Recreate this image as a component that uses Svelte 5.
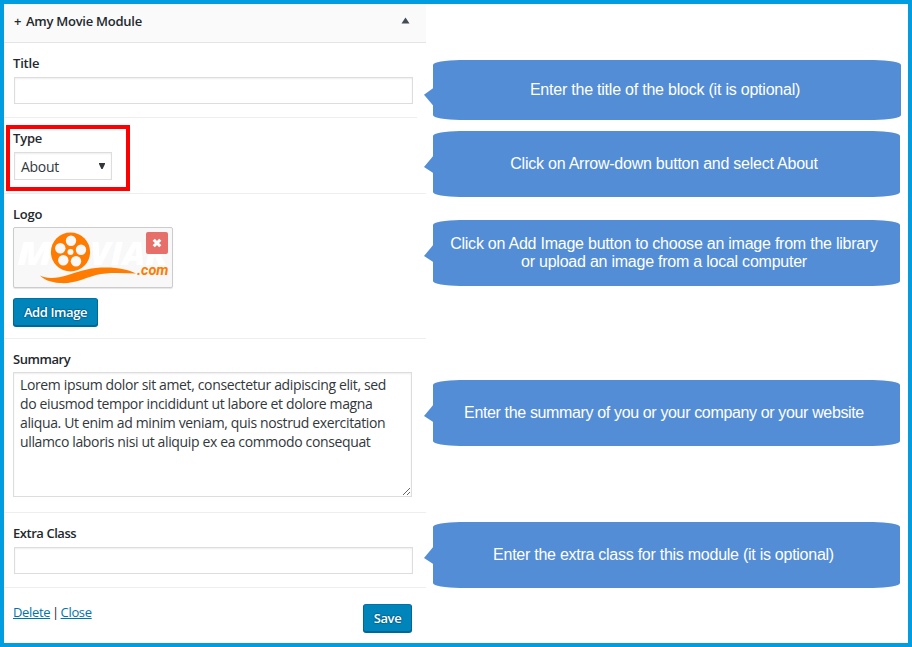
<script>
  const callouts = [
    { gap: 56, height: 60, width: 468, tail: 28, tracking: -0.22, inset: 4, lift: 0, lines: ['Enter the title of the block (it is optional)'] },
    { gap: 11, height: 66, width: 467, tail: 24, tracking: -0.235, inset: 5, lift: -1, lines: ['Click on Arrow-down button and select About'] },
    { gap: 23, height: 66, width: 467, tail: 24, tracking: -0.235, inset: 5, lift: -1, lines: ['Click on Add Image button to choose an image from the library', 'or upload an image from a local computer'] },
    { gap: 94, height: 66, width: 467, tail: 24, tracking: -0.355, inset: 5, lift: -1, lines: ['Enter the summary of you or your company or your website'] },
    { gap: 76, height: 66, width: 467, tail: 24, tracking: -0.26, inset: 6, lift: -1, lines: ['Enter the extra class for this module (it is optional)'] }
  ];
  const summary = [
    'Lorem ipsum dolor sit amet, consectetur adipiscing elit, sed',
    'do eiusmod tempor incididunt ut labore et dolore magna',
    'aliqua. Ut enim ad minim veniam, quis nostrud exercitation',
    'ullamco laboris nisi ut aliquip ex ea commodo consequat'
  ].join('\n');
</script>

<main class="frame">
  <section class="panel">
    <header>
      <span class="heading"><span class="plus">+</span>Amy Movie Module</span>
      <svg class="collapse" width="9" height="7" viewBox="0 0 9 7"><path d="M4.5 .5 8.5 6.5H.5z" fill="#444b54" /></svg>
    </header>

    <div class="row title">
      <label for="title">Title</label>
      <input id="title" type="text" />
    </div>

    <div class="row type">
      <div class="highlight"></div>
      <label for="type">Type</label>
      <div class="select" id="type">
        <span>About</span>
        <svg width="6" height="6" viewBox="0 0 6 6"><path d="M0 0H6V1L3.6 6H2.4L0 1z" fill="#32373c" /></svg>
      </div>
    </div>

    <div class="row logo">
      <span class="label">Logo</span>
      <div class="preview">
        <svg width="158" height="59" viewBox="14 228 158 59">
          <g class="word">
            <text x="17" y="265" textLength="36" lengthAdjust="spacingAndGlyphs">M</text>
            <text x="90" y="265" textLength="77" lengthAdjust="spacingAndGlyphs">VIAR</text>
          </g>
          <circle cx="70.500" cy="252" r="19.600" fill="#ff7c00" />
          <g fill="#f8f8f8">
            <circle cx="71" cy="240.700" r="5.200" />
            <circle cx="81" cy="249.700" r="5.200" />
            <circle cx="76" cy="261.200" r="5.200" />
            <circle cx="63.300" cy="260.200" r="5.200" />
            <circle cx="60.300" cy="248.200" r="5.200" />
            <circle cx="70.500" cy="252" r="3" />
          </g>
          <path d="M40 275.500C46 279 57 278.500 68 275C83 270 91 267.500 106 267.500C119 267.500 129 270 136 273.500C122 273 108 272 96 275C82 279 74 284 60 283C50 282.500 43 279 40 275.500Z" fill="#ff7c00" />
          <text class="com" x="137" y="275" textLength="31.500" lengthAdjust="spacingAndGlyphs">.com</text>
        </svg>
        <span class="remove">
          <svg width="10" height="10" viewBox="0 0 10 10"><path d="M1.700 1.700 8.300 8.300M8.300 1.700 1.700 8.300" stroke="#fff" stroke-width="3" /></svg>
        </span>
      </div>
      <button class="add">Add Image</button>
    </div>

    <div class="row summary">
      <label for="summary">Summary</label>
      <textarea id="summary" spellcheck="false" value={summary}></textarea>
    </div>

    <div class="row extra">
      <label for="extra">Extra Class</label>
      <input id="extra" type="text" />
    </div>

    <footer>
      <div class="links"><span class="link">Delete</span> | <span class="link">Close</span></div>
      <button class="save">Save</button>
    </footer>
  </section>

  <aside>
    {#each callouts as c}
      <div class="callout" style="margin-top:{c.gap}px;height:{c.height}px;width:{c.width}px">
        <svg class="tail" style="top:{c.tail}px" width="10" height="18" viewBox="0 0 10 18">
          <path d={c.height === 60 ? 'M10 -.5V18.500L0 6.700z' : 'M10 0V18.500L0 12z'} fill="#538dd5" />
        </svg>
        <p style="padding-right:{c.inset}px;margin-top:{c.lift}px;letter-spacing:{c.tracking}px">
          {#each c.lines as line}<span>{line}</span>{/each}
        </p>
      </div>
    {/each}
  </aside>
</main>

<style>
  :global(body) { margin: 0; background: #fff; }
  .frame {
    box-sizing: border-box;
    width: 912px;
    height: 647px;
    border: 4px solid #009ee0;
    display: flex;
    overflow: hidden;
    background: #fff;
    font: 600 13px/18px "Open Sans", "Noto Sans", sans-serif;
    color: #23282d;
  }
  .panel { width: 422px; flex: none; }
  header {
    box-sizing: border-box;
    height: 39px;
    padding: 8px 16px 0 10px;
    background: #fafafa;
    border-bottom: 1px solid #e5e5e5;
    display: flex;
    justify-content: space-between;
  }
  .heading { letter-spacing: -.26px; }
  .plus { display: inline-block; width: 12px; }
  .collapse { margin-top: 5px; }
  .row {
    box-sizing: border-box;
    padding: 11px 0 0 9px;
    border-bottom: 1px solid #eee;
    display: flex;
    flex-direction: column;
    align-items: flex-start;
    position: relative;
  }
  .title { height: 75px; width: 413px; }
  .type { height: 76px; }
  .logo { height: 145px; }
  .summary { height: 174px; }
  .extra { height: 75px; }
  label, .label { display: block; height: 18px; letter-spacing: -.45px; }
  .title label, .type label, .label { letter-spacing: -.2px; }
  input, .select, textarea {
    box-sizing: border-box;
    border: 1px solid #ddd;
    border-radius: 0;
    background: #fff;
    box-shadow: inset 0 1px 2px rgba(0, 0, 0, .07);
    color: #32373c;
    outline: none;
  }
  input { width: 399px; height: 27px; margin: 5px 0 0 1px; }
  .select {
    width: 98px;
    height: 28px;
    margin: 5px 0 0 1px;
    padding: 0 6px;
    display: flex;
    align-items: center;
    justify-content: space-between;
    font-size: 14px;
    letter-spacing: -.3px;
    font-weight: 400;
  }
  .select span { padding-top: 2px; }
  .highlight {
    position: absolute;
    box-sizing: border-box;
    left: 2px;
    top: 7px;
    width: 124px;
    height: 66px;
    border: 4px solid #f00;
  }
  .preview {
    position: relative;
    box-sizing: border-box;
    width: 160px;
    height: 61px;
    margin-top: 4px;
    border: 1px solid #ccc;
    border-radius: 2px;
    background: #f8f8f8;
    box-shadow: 0 1px 1px rgba(0, 0, 0, .1);
  }
  .preview > svg { display: block; }
  .word { font: italic 800 32px "Open Sans", sans-serif; fill: #fff; }
  .com { font: italic 700 15px Roboto, sans-serif; fill: #ff7c00; }
  .remove {
    position: absolute;
    left: 132px;
    top: 4px;
    width: 22px;
    height: 22px;
    border-radius: 2px;
    background: #e66f6a;
    display: grid;
    place-items: center;
  }
  button {
    box-sizing: border-box;
    padding: 0;
    border: 1px solid #006799;
    border-radius: 3px;
    border-color: #0073aa #006799 #006799;
    background: #0085ba;
    box-shadow: 0 1px 0 #006799;
    color: #fff;
    font: 600 13px/26px "Open Sans", sans-serif;
    letter-spacing: -.4px;
    text-shadow: 0 -1px 1px #006799, 1px 0 1px #006799, 0 1px 1px #006799, -1px 0 1px #006799;
  }
  .add { width: 85px; height: 28px; margin-top: 10px; }
  textarea {
    width: 399px;
    height: 125px;
    margin: 4px 0 0;
    padding: 2px 6px;
    font: 400 14px/19px "Open Sans", sans-serif;
    letter-spacing: -.36px;
    white-space: pre;
    resize: both;
    overflow: hidden;
  }
  footer {
    display: flex;
    justify-content: space-between;
    padding: 16px 14px 0 9px;
    font-weight: 400;
  }
  .links { margin-top: -1px; letter-spacing: -.35px; word-spacing: -1.2px; }
  .link { color: #0073aa; text-decoration: underline; }
  .save { width: 49px; height: 28px; }
  aside { width: 482px; padding-left: 7px; }
  .callout {
    position: relative;
    box-sizing: border-box;
    background: #538dd5;
    border-radius: 27px / 5px;
    display: flex;
    align-items: center;
    justify-content: center;
    color: #fff;
    font: 400 16px/18px "Liberation Sans", Arial, sans-serif;
  }
  .tail { position: absolute; left: -9px; }
  p { margin: 0; text-align: center; }
  p span { display: block; white-space: nowrap; }
</style>
